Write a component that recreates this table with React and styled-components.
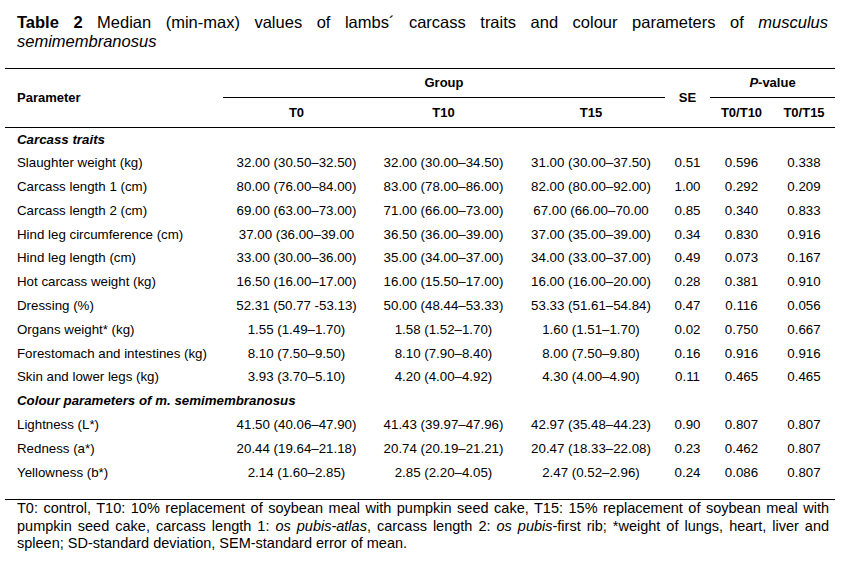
import styled, { createGlobalStyle } from 'styled-components';

const GlobalStyle = createGlobalStyle`
  body {
    margin: 0;
    background: #ffffff;
    color: #000000;
    font-family: "Liberation Sans", Arial, sans-serif;
  }
`;

const sections = [
  {
    title: 'Carcass traits',
    rows: [
      ['Slaughter weight (kg)', '32.00 (30.50–32.50)', '32.00 (30.00–34.50)', '31.00 (30.00–37.50)', '0.51', '0.596', '0.338'],
      ['Carcass length 1 (cm)', '80.00 (76.00–84.00)', '83.00 (78.00–86.00)', '82.00 (80.00–92.00)', '1.00', '0.292', '0.209'],
      ['Carcass length 2 (cm)', '69.00 (63.00–73.00)', '71.00 (66.00–73.00)', '67.00 (66.00–70.00', '0.85', '0.340', '0.833'],
      ['Hind leg circumference (cm)', '37.00 (36.00–39.00', '36.50 (36.00–39.00)', '37.00 (35.00–39.00)', '0.34', '0.830', '0.916'],
      ['Hind leg length (cm)', '33.00 (30.00–36.00)', '35.00 (34.00–37.00)', '34.00 (33.00–37.00)', '0.49', '0.073', '0.167'],
      ['Hot carcass weight (kg)', '16.50 (16.00–17.00)', '16.00 (15.50–17.00)', '16.00 (16.00–20.00)', '0.28', '0.381', '0.910'],
      ['Dressing (%)', '52.31 (50.77 -53.13)', '50.00 (48.44–53.33)', '53.33 (51.61–54.84)', '0.47', '0.116', '0.056'],
      ['Organs weight* (kg)', '1.55 (1.49–1.70)', '1.58 (1.52–1.70)', '1.60 (1.51–1.70)', '0.02', '0.750', '0.667'],
      ['Forestomach and intestines (kg)', '8.10 (7.50–9.50)', '8.10 (7.90–8.40)', '8.00 (7.50–9.80)', '0.16', '0.916', '0.916'],
      ['Skin and lower legs (kg)', '3.93 (3.70–5.10)', '4.20 (4.00–4.92)', '4.30 (4.00–4.90)', '0.11', '0.465', '0.465'],
    ],
  },
  {
    title: 'Colour parameters of m. semimembranosus',
    rows: [
      ['Lightness (L*)', '41.50 (40.06–47.90)', '41.43 (39.97–47.96)', '42.97 (35.48–44.23)', '0.90', '0.807', '0.807'],
      ['Redness (a*)', '20.44 (19.64–21.18)', '20.74 (20.19–21.21)', '20.47 (18.33–22.08)', '0.23', '0.462', '0.807'],
      ['Yellowness (b*)', '2.14 (1.60–2.85)', '2.85 (2.20–4.05)', '2.47 (0.52–2.96)', '0.24', '0.086', '0.807'],
    ],
  },
];

const widths = [218, 147, 147, 148, 45, 63, 62];

function App() {
  return (
    <Page>
      <GlobalStyle />
      <Caption>
        <b>Table 2</b> Median (min-max) values of lambs´ carcass traits and colour parameters of{' '}
        <i>musculus semimembranosus</i>
      </Caption>
      <TableFrame>
        <DataTable>
          <colgroup>
            {widths.map((w, i) => (
              <col key={i} style={{ width: w }} />
            ))}
          </colgroup>
          <thead>
            <HeadRow>
              <HeadCell rowSpan={2} $left>
                Parameter
              </HeadCell>
              <HeadCell colSpan={3} $rule>
                Group
              </HeadCell>
              <HeadCell rowSpan={2}>SE</HeadCell>
              <HeadCell colSpan={2} $rule>
                <i>P</i>-value
              </HeadCell>
            </HeadRow>
            <HeadRow $second>
              <HeadCell>T0</HeadCell>
              <HeadCell>T10</HeadCell>
              <HeadCell>T15</HeadCell>
              <HeadCell>T0/T10</HeadCell>
              <HeadCell>T0/T15</HeadCell>
            </HeadRow>
          </thead>
          <tbody>
            {sections.map((section) => [
              <BodyRow key={section.title}>
                <SectionCell colSpan={7}>{section.title}</SectionCell>
              </BodyRow>,
              ...section.rows.map((row) => (
                <BodyRow key={row[0]}>
                  {row.map((value, i) =>
                    i === 0 ? <LabelCell key={i}>{value}</LabelCell> : <Cell key={i}>{value}</Cell>
                  )}
                </BodyRow>
              )),
            ])}
          </tbody>
        </DataTable>
      </TableFrame>
      <Note>
        T0: control, T10: 10% replacement of soybean meal with pumpkin seed cake, T15: 15% replacement of
        soybean meal with pumpkin seed cake, carcass length 1: <i>os pubis-atlas</i>, carcass length 2:{' '}
        <i>os pubis</i>-first rib; *weight of lungs, heart, liver and spleen; SD-standard deviation,
        SEM-standard error of mean.
      </Note>
    </Page>
  );
}

const Page = styled.div`
  width: 848px;
  height: 566px;
  padding-top: 13px;
  box-sizing: border-box;
  overflow: hidden;
`;

const Caption = styled.p`
  margin: 0 0 17px 17px;
  width: 811px;
  font-size: 16.5px;
  line-height: 19px;
  text-align: justify;
  text-align-last: left;

  b {
    font-weight: bold;
  }
`;

const TableFrame = styled.div`
  margin-left: 5px;
  width: 830px;
  border-top: 1px solid #000;
  border-bottom: 1px solid #000;
  padding-bottom: 15px;
`;

const DataTable = styled.table`
  width: 830px;
  table-layout: fixed;
  border-collapse: collapse;
  border-spacing: 0;
  font-size: 13.3px;
`;

const HeadRow = styled.tr`
  height: ${(p) => (p.$second ? '30px' : '28px')};

  ${(p) => p.$second && 'border-bottom: 1px solid #000;'}
`;

const HeadCell = styled.th`
  padding: 0;
  font-size: 13px;
  font-weight: bold;
  text-align: ${(p) => (p.$left ? 'left' : 'center')};
  padding-left: ${(p) => (p.$left ? '12px' : '0')};
  vertical-align: middle;
  border-bottom: ${(p) => (p.$rule ? '1px solid #000' : 'none')};
`;

const BodyRow = styled.tr`
  height: 23.8px;
`;

const Cell = styled.td`
  padding: 0;
  text-align: center;
  white-space: nowrap;
  line-height: 23.8px;
`;

const LabelCell = styled(Cell)`
  text-align: left;
  padding-left: 12px;
`;

const SectionCell = styled(LabelCell)`
  font-weight: bold;
  font-style: italic;
`;

const Note = styled.p`
  margin: 0 0 0 17px;
  width: 812px;
  font-size: 14.5px;
  line-height: 17.5px;
  text-align: justify;
`;

export default App;
